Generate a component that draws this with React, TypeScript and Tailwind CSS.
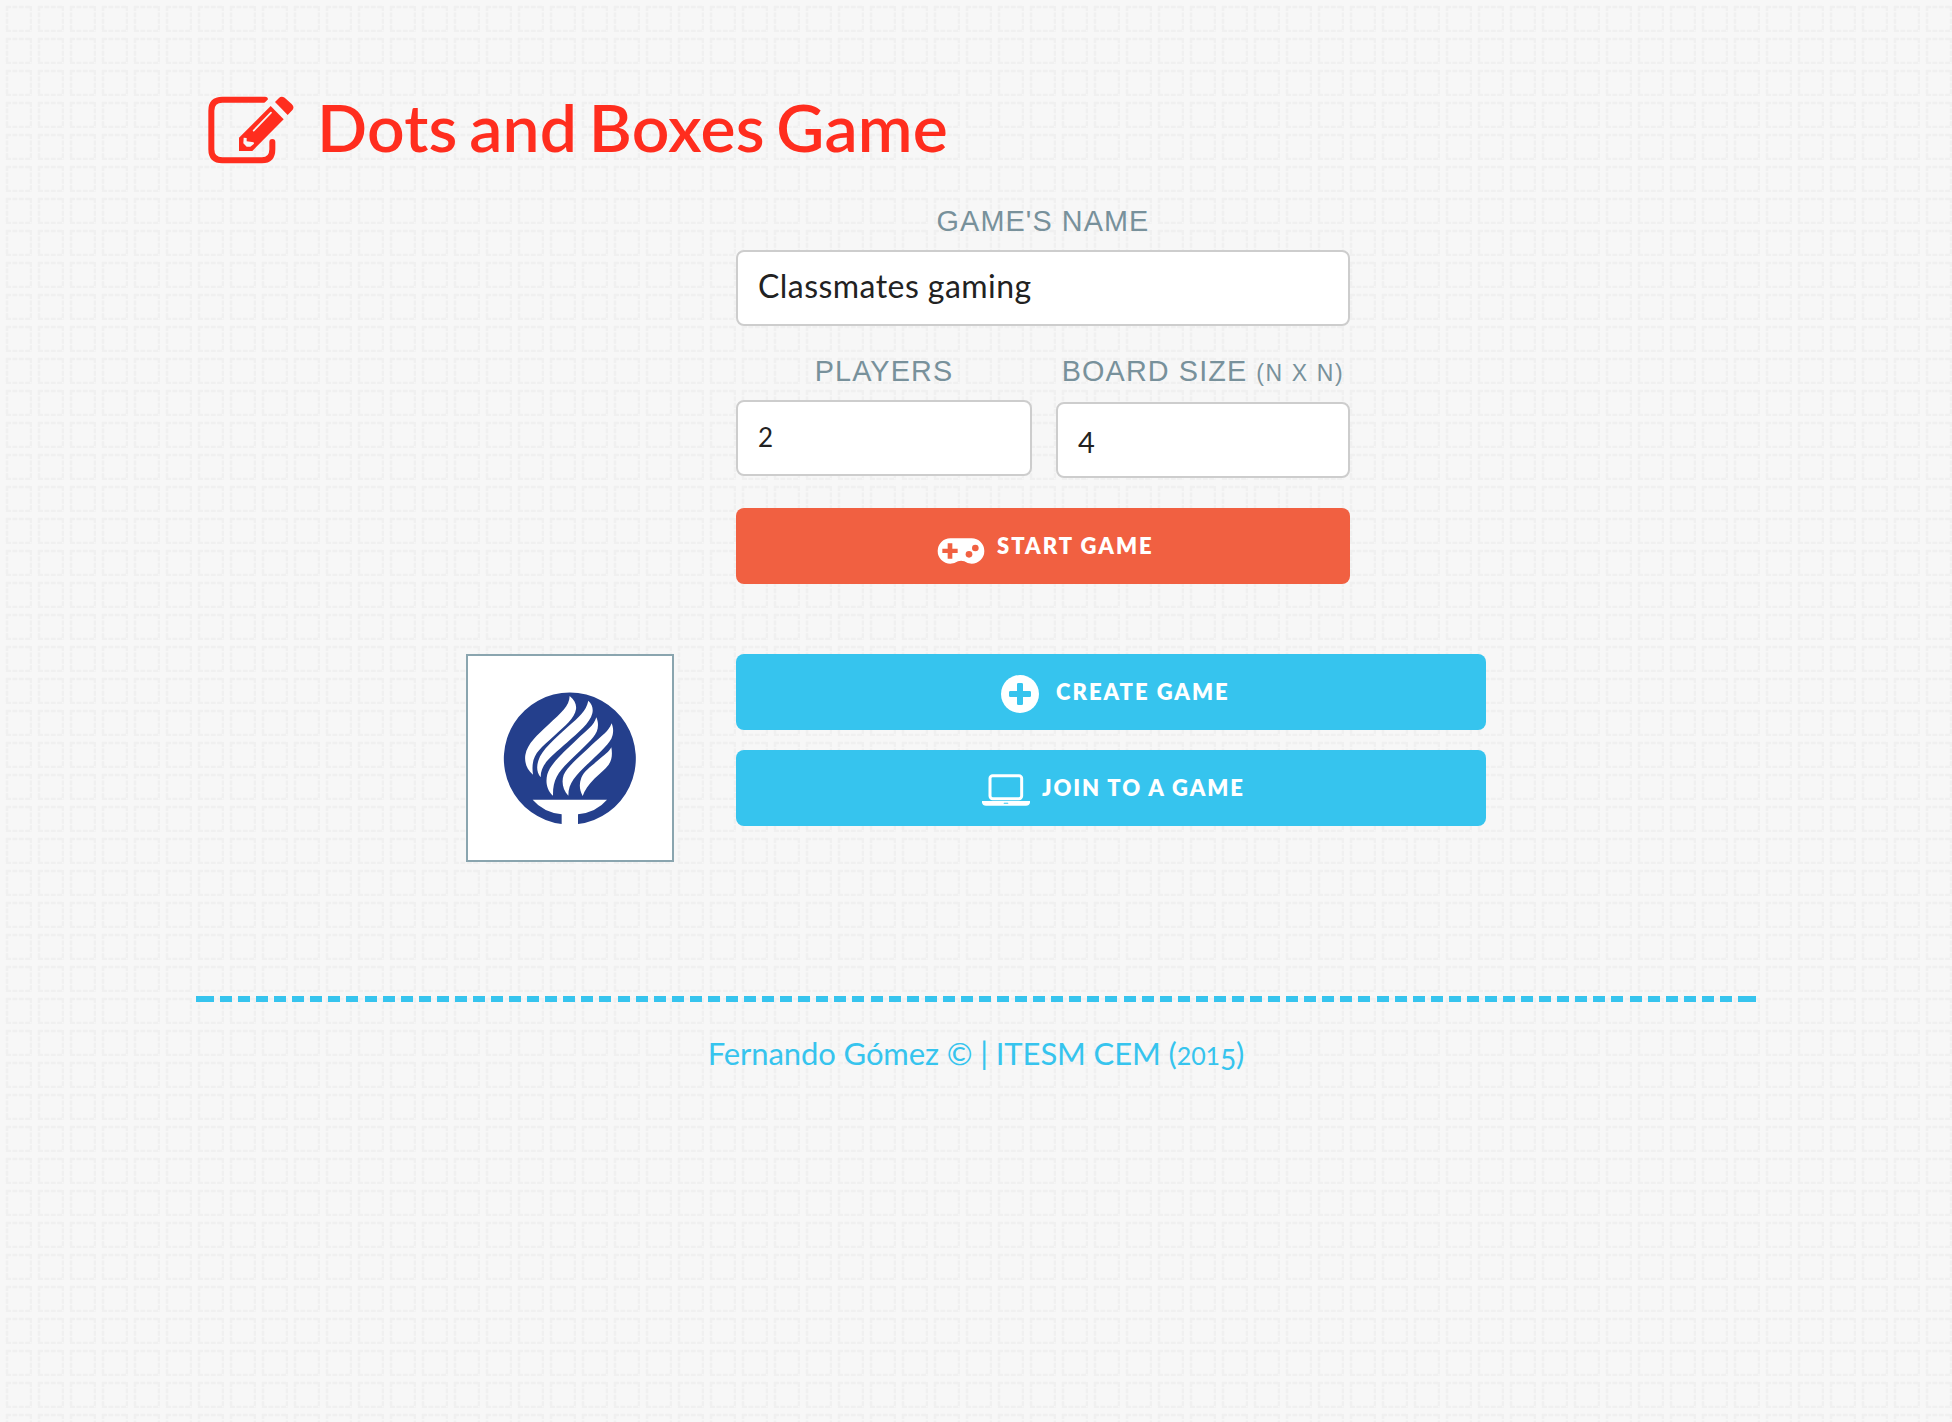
import type { ReactNode } from "react";

const Backdrop = () => (
  <svg className="absolute inset-0 -z-10 h-full w-full" aria-hidden="true">
    <defs>
      <pattern id="stitch" width="32" height="32" patternUnits="userSpaceOnUse">
        <g stroke="#f0f0f0" strokeWidth="2.6" strokeDasharray="4.9 1.5">
          <path d="M6 7H32.5M6 31H32.5" />
          <path d="M7 6V32.5M31 6V32.5" />
        </g>
      </pattern>
    </defs>
    <rect width="100%" height="100%" fill="url(#stitch)" />
  </svg>
);

const ComposeIcon = () => (
  <svg className="h-[68px] w-[86px] shrink-0" viewBox="0 0 258 204" fill="#ff2d1e">
    <path
      d="M171 11H43Q10 11 10 44V160Q10 193 43 193H162Q193 193 193 160V138"
      fill="none"
      stroke="#ff2d1e"
      strokeWidth="18"
      strokeLinecap="round"
    />
    <path d="M186 4L166 24L178 26L194 8Z" fill="#f7f7f7" />
    <path d="M201 18L213 6Q220 -1 230 5L251 24Q260 32 254 41L239 57Z" />
    <path d="M188 30L227 70L133 165H93V125Z" />
    <path d="M189 50L137 104" fill="none" stroke="#f7f7f7" strokeWidth="5" strokeLinecap="round" />
    <path d="M107 125L116 126V136L137 139L138 143L127 152H116L106 142Z" fill="#f7f7f7" />
  </svg>
);

const GamepadIcon = () => (
  <svg className="h-[26px] w-12 shrink-0" viewBox="0 0 142 78" fill="#fff">
    <path d="M39 1H103A38 38 0 0 1 103 77Q90 77 81 70Q71 67 62 70Q52 77 39 77A38 38 0 0 1 39 1Z" />
    <g fill="#f16041">
      <path d="M31 16H45V32H61V45H45V62H31V45H15V32H31Z" />
      <circle cx="95" cy="49" r="10" />
      <circle cx="114" cy="30" r="10" />
    </g>
  </svg>
);

const PlusIcon = () => (
  <svg className="size-[38px] shrink-0" viewBox="0 0 114 114">
    <circle cx="57" cy="57" r="57" fill="#fff" />
    <path d="M48 28Q48 24 52 24H62Q66 24 66 28V48H86Q90 48 90 52V62Q90 66 86 66H66V86Q66 90 62 90H52Q48 90 48 86V66H28Q24 66 24 62V52Q24 48 28 48H48Z" fill="#36c4ee" />
  </svg>
);

const LaptopIcon = () => (
  <svg className="h-8 w-12 shrink-0" viewBox="0 0 144 96" fill="#fff">
    <rect x="24" y="5" width="95" height="69" rx="8" fill="none" stroke="#fff" strokeWidth="9" />
    <path d="M0 81H144V86Q142 95 132 95H12Q2 95 0 86Z" />
    <rect x="65" y="86" width="14" height="3" rx="1.5" fill="#36c4ee" />
  </svg>
);

const TorchLogo = () => (
  <svg className="size-[204px]" viewBox="54 48 612 612">
    <path
      d="M335 552A198 198 0 1 1 384 552V523Q440 516 471 479H248Q279 516 335 523Z"
      fill="#243f8c"
    />
    <g fill="#fff">
      <path d="M359 168C374 180 380 194 378 208C374 235 345 258 312 288C265 330 241 347 249 404C229 388 223 365 226 345C232 310 262 285 295 254C335 217 358 198 359 168Z" />
      <path d="M415 182C427 194 430 206 427 220C420 250 385 277 352 307C300 353 272 372 272 412C259 395 260 378 265 362C275 330 315 296 352 262C388 229 408 215 415 182Z" />
      <path d="M439 232C446 248 445 262 440 275C430 297 400 322 370 352C327 393 308 415 309 467C290 450 286 425 292 403C300 372 345 333 380 299C413 268 431 258 439 232Z" />
      <path d="M485 250C492 268 490 283 484 296C472 318 440 345 412 373C378 407 355 428 355 467C338 450 334 425 341 405C352 378 395 345 425 315C458 285 475 275 485 250Z" />
      <path d="M484 322C488 345 485 361 476 374C465 389 450 399 433 416C415 434 404 450 398 468C388 450 387 432 394 413C403 392 425 378 445 360C465 343 476 337 484 322Z" />
    </g>
  </svg>
);

const label = "block h-8 text-center font-['Liberation_Sans',sans-serif] text-[28.8px] leading-8 tracking-[1.1px] text-[#78919b] uppercase whitespace-nowrap";
const field = "flex h-[76px] items-center rounded-lg border-2 border-[#cdcdcd] bg-white pl-5 text-[30px] leading-none text-[#222]";
const button = "flex h-[76px] items-center rounded-lg text-[22px] font-extrabold text-white uppercase whitespace-nowrap";

const Small = ({ children }: { children: ReactNode }) => <span className="text-[25px]">{children}</span>;

export default function App() {
  return (
    <div className="relative isolate min-h-[1422px] w-full overflow-hidden bg-[#f7f7f7] font-[Lato,sans-serif]">
      <Backdrop />
      <main className="mx-auto w-[1560px] pt-[96px]">
        <h1 className="flex h-[68px] items-center pl-3 text-[66px] leading-none font-semibold tracking-[0.2px] text-[#ff2d1e]">
          <ComposeIcon />
          <span className="ml-[23px] pb-[7px] [word-spacing:-5px] whitespace-nowrap">Dots and Boxes Game</span>
        </h1>

        <form className="ml-[540px] w-[614px] pt-[41px]">
          <label className={label}>Game's name</label>
          <div className={field + " mt-[13px]"}>
            <span className="pb-1 text-[32px] tracking-[0.45px]">Classmates gaming</span>
          </div>
          <div className="flex justify-between pt-[29px]">
            <div className="w-[296px]">
              <label className={label + " tracking-[0.6px]"}>Players</label>
              <div className={field + " mt-[13px]"}>
                <span className="pb-[2px] text-[26px]">2</span>
              </div>
            </div>
            <div className="w-[294px]">
              <label className={label}>
                Board size <span className="text-[23px] tracking-[1.6px]">(n x n)</span>
              </label>
              <div className={field + " mt-[15px]"}>
                <span className="pt-[2px] text-[29px]">4</span>
              </div>
            </div>
          </div>
          <div className={button + " mt-[30px] bg-[#f16041] pl-[201px]"}>
            <span className="pt-[10px]"><GamepadIcon /></span>
            <span className="ml-3 pb-[2px] tracking-[2px]">Start game</span>
          </div>
        </form>

        <section className="flex items-start pt-[70px] pl-[270px]">
          <div className="size-[208px] border-2 border-[#8aa5af] bg-white">
            <TorchLogo />
          </div>
          <div className="ml-[62px] flex w-[750px] flex-col gap-5">
            <div className={button + " bg-[#36c4ee] pl-[265px]"}>
              <span className="pt-1"><PlusIcon /></span>
              <span className="ml-[17px] pb-[2px] tracking-[2px]">Create game</span>
            </div>
            <div className={button + " bg-[#36c4ee] pl-[246px]"}>
              <span className="pt-1"><LaptopIcon /></span>
              <span className="ml-3 pb-[2px] tracking-[1.9px]">Join to a game</span>
            </div>
          </div>
        </section>

        <footer className="pt-[134px] text-[#36c4ee]">
          <div className="flex h-[6px]">
            <div className="mr-[6px] w-[18px] bg-[#36c4ee]" />
            <div className="w-[1518px] bg-[repeating-linear-gradient(90deg,#36c4ee_0_12px,transparent_12px_18.0714px)]" />
            <div className="w-[18px] bg-[#36c4ee]" />
          </div>
          <p className="pt-[33px] text-center text-[31px] leading-9 tracking-[-0.1px] whitespace-nowrap">
            Fernando Gómez © | ITESM CEM (<Small>201</Small>
            <span className="relative top-[5px] text-[28px]">5</span>)
          </p>
        </footer>
      </main>
    </div>
  );
}
